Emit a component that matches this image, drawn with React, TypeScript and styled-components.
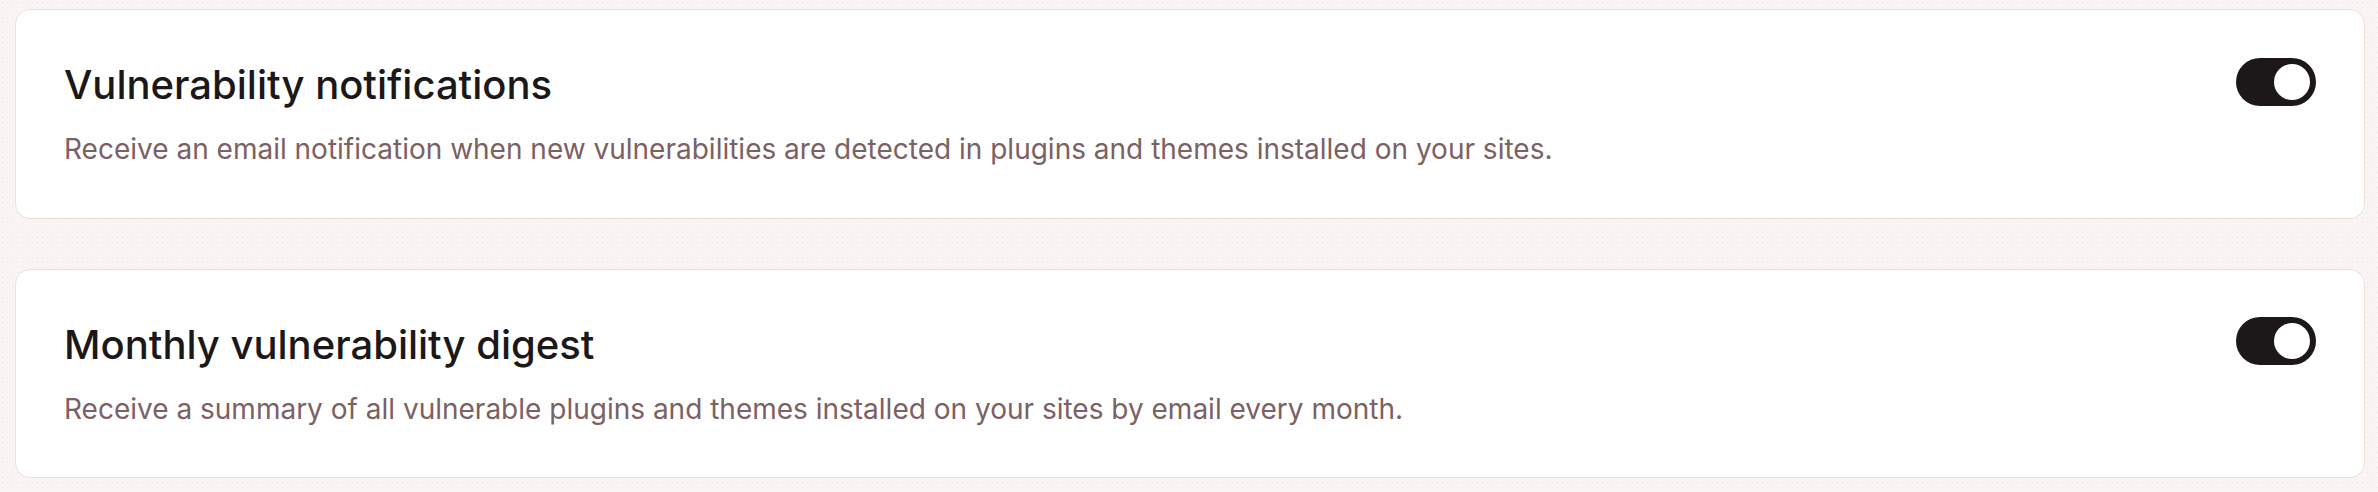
import React, { useState } from "react";
import styled, { createGlobalStyle } from "styled-components";

const Global = createGlobalStyle`
  html, body {
    margin: 0;
    padding: 0;
    background-color: #faf5f4;
    background-image: radial-gradient(rgba(226, 200, 200, 0.35) 0.8px, transparent 1px);
    background-size: 5px 5px;
    font-family: Inter, "Noto Sans", sans-serif;
  }
`;

const Page = styled.div`
  display: flex;
  flex-direction: column;
  gap: 50px;
  padding: 9px 13px 0 15px;
`;

const Card = styled.section`
  display: flex;
  align-items: flex-start;
  justify-content: space-between;
  gap: 48px;
  background: #ffffff;
  border: 1.5px solid #ebe0d9;
  border-radius: 15px;
  padding: 48px;
`;

const Text = styled.div`
  display: flex;
  flex-direction: column;
  gap: 18px;
`;

const Title = styled.h2`
  margin: 0;
  font-size: 40px;
  font-weight: 500;
  line-height: 53px;
  color: #1c1718;
`;

const Desc = styled.p`
  margin: 0;
  font-size: 28px;
  font-weight: 400;
  line-height: 40.5px;
  color: #7b6163;
`;

const Switch = styled.button<{ $on: boolean }>`
  flex: none;
  width: 80px;
  height: 48px;
  border: none;
  border-radius: 24px;
  padding: 0;
  margin-top: -0.5px;
  background: ${(p) => (p.$on ? "#1c1819" : "#d9cfcf")};
  position: relative;
  cursor: pointer;
`;

const Knob = styled.span<{ $on: boolean }>`
  position: absolute;
  top: 6px;
  left: ${(p) => (p.$on ? "38px" : "6px")};
  width: 36px;
  height: 36px;
  border-radius: 50%;
  background: #ffffff;
  transition: left 0.15s ease;
`;

const items = [
  {
    title: "Vulnerability notifications",
    desc: "Receive an email notification when new vulnerabilities are detected in plugins and themes installed on your sites.",
  },
  {
    title: "Monthly vulnerability digest",
    desc: "Receive a summary of all vulnerable plugins and themes installed on your sites by email every month.",
  },
];

function Row({ title, desc }: { title: string; desc: string }) {
  const [on, setOn] = useState(true);
  return (
    <Card>
      <Text>
        <Title>{title}</Title>
        <Desc>{desc}</Desc>
      </Text>
      <Switch $on={on} role="switch" aria-checked={on} onClick={() => setOn(!on)}>
        <Knob $on={on} />
      </Switch>
    </Card>
  );
}

export default function App() {
  return (
    <>
      <Global />
      <Page>
        {items.map((it) => (
          <Row key={it.title} title={it.title} desc={it.desc} />
        ))}
      </Page>
    </>
  );
}
